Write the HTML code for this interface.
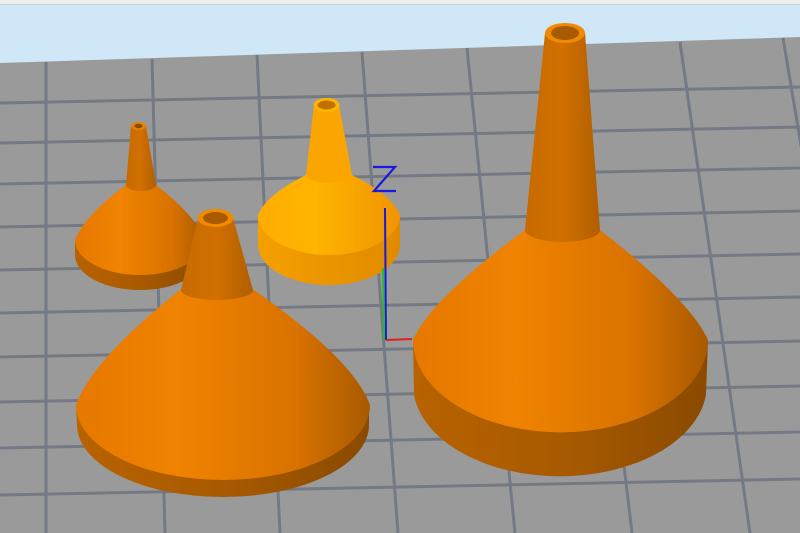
<!DOCTYPE html>
<html><head><meta charset="utf-8"><style>
html,body{margin:0;padding:0;width:800px;height:533px;overflow:hidden;background:#9a9a9a}
svg{display:block}
</style></head><body>
<svg width="800" height="533" viewBox="0 0 800 533" xmlns="http://www.w3.org/2000/svg">
<defs>
<linearGradient id="cone" x1="0" x2="1" y1="0" y2="0">
<stop offset="0" stop-color="#e67800"/><stop offset="0.35" stop-color="#f08300"/><stop offset="0.75" stop-color="#d87200"/><stop offset="1" stop-color="#a85a00"/></linearGradient>
<linearGradient id="cyl" x1="0" x2="1" y1="0" y2="0">
<stop offset="0" stop-color="#b86200"/><stop offset="0.5" stop-color="#a85a00"/><stop offset="1" stop-color="#8a4a00"/></linearGradient>
<linearGradient id="spout" x1="0" x2="1" y1="0" y2="0">
<stop offset="0" stop-color="#c86a00"/><stop offset="0.5" stop-color="#d07000"/><stop offset="1" stop-color="#b05e00"/></linearGradient>
<linearGradient id="ycone" x1="0" x2="1" y1="0" y2="0">
<stop offset="0" stop-color="#ffad00"/><stop offset="0.4" stop-color="#ffb400"/><stop offset="1" stop-color="#f09400"/></linearGradient>
<linearGradient id="ycyl" x1="0" x2="1" y1="0" y2="0">
<stop offset="0" stop-color="#f5a000"/><stop offset="1" stop-color="#e08a00"/></linearGradient>
</defs>
<rect x="0" y="0" width="800" height="533" fill="#9a9a9a"/>
<polygon points="0,0 800,0 800,37 0,63" fill="#d0e7f8"/>
<rect x="0" y="0" width="800" height="4" fill="#eeeeee"/>
<line x1="0" y1="4.5" x2="800" y2="4.5" stroke="#cfcfcf"/>
<g stroke="#6e7580" stroke-width="3" opacity="0.85">
<line x1="0" y1="103" x2="800" y2="87"/>
<line x1="0" y1="143" x2="800" y2="127"/>
<line x1="0" y1="184" x2="800" y2="168"/>
<line x1="0" y1="227" x2="800" y2="211"/>
<line x1="0" y1="270" x2="800" y2="254"/>
<line x1="0" y1="313" x2="800" y2="297"/>
<line x1="0" y1="357" x2="800" y2="341"/>
<line x1="0" y1="402" x2="800" y2="386"/>
<line x1="0" y1="448" x2="800" y2="432"/>
<line x1="0" y1="495" x2="800" y2="479"/>
<line x1="46" y1="62" x2="46" y2="533"/>
<line x1="152" y1="59" x2="165" y2="533"/>
<line x1="257" y1="55" x2="280" y2="533"/>
<line x1="362" y1="52" x2="398" y2="533"/>
<line x1="467" y1="48" x2="515" y2="533"/>
<line x1="574" y1="45" x2="632" y2="533"/>
<line x1="680" y1="42" x2="750" y2="533"/>
<line x1="783" y1="38" x2="866" y2="533"/>
</g>
<!-- Funnel A -->
<g>
<path d="M75,240 L75,255 A65,35 0 0 0 205,255 L205,240 Z" fill="url(#cyl)"/>
<path d="M126,185 Q85,215 75,240 A65,35 0 0 0 205,240 Q195,215 156,185 Z" fill="url(#cone)"/>
<path d="M131,126 L126,185 A15,6 0 0 0 156,185 L146,126 Z" fill="url(#spout)"/>
<ellipse cx="138.5" cy="126" rx="7.5" ry="4" fill="#e88000"/>
<ellipse cx="138.5" cy="126" rx="4" ry="2.2" fill="#8a4a00"/>
</g>
<!-- Funnel C yellow -->
<g>
<path d="M258,215 L258,245 A71,40 0 0 0 400,245 L400,215 Z" fill="url(#ycyl)"/>
<path d="M306,175 Q266,195 258,215 A71,40 0 0 0 400,215 Q392,195 352,175 Z" fill="url(#ycone)"/>
<path d="M314,105 L306,175 A23,8 0 0 0 352,175 L339,105 Z" fill="#fba600"/>
<ellipse cx="326.5" cy="105" rx="13" ry="7" fill="#ffb400"/>
<ellipse cx="326.5" cy="105" rx="9" ry="4.5" fill="#c07000"/>
</g>
<!-- Axes -->
<line x1="385" y1="208" x2="386" y2="340" stroke="#1818e0" stroke-width="2"/>
<line x1="383" y1="268" x2="384" y2="340" stroke="#20c020" stroke-width="2"/>
<line x1="386" y1="340" x2="412" y2="339" stroke="#e02020" stroke-width="2"/>
<path d="M373,167 L395,167 L374,191 L396,191" fill="none" stroke="#1818e0" stroke-width="2.2"/>
<!-- Funnel B -->
<g>
<path d="M76,405 L77,425 A146,72 0 0 0 369,425 L369,405 Z" fill="url(#cyl)"/>
<path d="M180,290 Q92,360 76,405 A147,75 0 0 0 370,405 Q354,360 254,290 Z" fill="url(#cone)"/>
<path d="M198,218 L181,290 A36,10 0 0 0 253,290 L233,218 Z" fill="url(#spout)"/>
<ellipse cx="215.5" cy="218" rx="18" ry="9" fill="#f08a00"/>
<ellipse cx="215.5" cy="218" rx="12.5" ry="6" fill="#a85a00"/>
</g>
<!-- Funnel D -->
<g>
<path d="M413,340 L414,395 A147,92 0 0 0 706,395 L708,340 Z" fill="url(#cyl)"/>
<path d="M525,230 Q430,300 413,340 A147,92 0 0 0 708,340 Q690,300 600,230 Z" fill="url(#cone)"/>
<path d="M545,33 L525,230 A37.5,12 0 0 0 600,230 L585,33 Z" fill="url(#spout)"/>
<ellipse cx="565" cy="33" rx="20" ry="10" fill="#f08a00"/>
<ellipse cx="565" cy="33" rx="14" ry="7" fill="#a85a00"/>
</g>
</svg>
</body></html>
